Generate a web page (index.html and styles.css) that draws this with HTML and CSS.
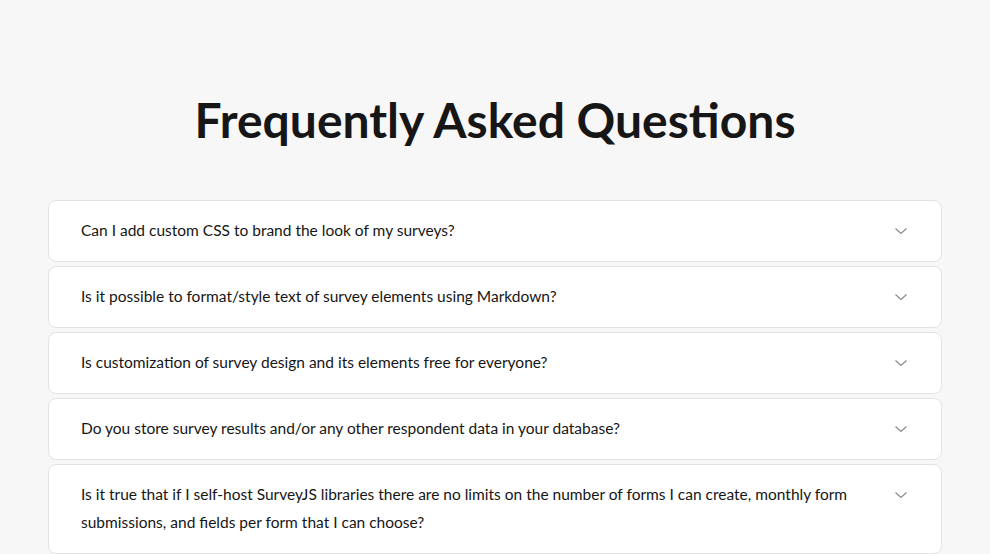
FILE: index.html
```html
<!DOCTYPE html>
<html lang="en">
<head>
<meta charset="utf-8">
<title>FAQ</title>
<link rel="stylesheet" href="styles.css">
</head>
<body>
<main class="faq">
  <h1 class="faq-title">Frequently Asked Questions</h1>
  <div class="faq-list">
    <div class="faq-item">
      <span class="faq-q">Can I add custom CSS to brand the look of my surveys?</span>
      <svg class="faq-icon" viewBox="0 0 16 16" width="16" height="16"><path d="M2.5 5.5 L8 10.5 L13.5 5.5" fill="none" stroke="#8a8a8a" stroke-width="1.2"/></svg>
    </div>
    <div class="faq-item">
      <span class="faq-q">Is it possible to format/style text of survey elements using Markdown?</span>
      <svg class="faq-icon" viewBox="0 0 16 16" width="16" height="16"><path d="M2.5 5.5 L8 10.5 L13.5 5.5" fill="none" stroke="#8a8a8a" stroke-width="1.2"/></svg>
    </div>
    <div class="faq-item">
      <span class="faq-q">Is customization of survey design and its elements free for everyone?</span>
      <svg class="faq-icon" viewBox="0 0 16 16" width="16" height="16"><path d="M2.5 5.5 L8 10.5 L13.5 5.5" fill="none" stroke="#8a8a8a" stroke-width="1.2"/></svg>
    </div>
    <div class="faq-item">
      <span class="faq-q">Do you store survey results and/or any other respondent data in your database?</span>
      <svg class="faq-icon" viewBox="0 0 16 16" width="16" height="16"><path d="M2.5 5.5 L8 10.5 L13.5 5.5" fill="none" stroke="#8a8a8a" stroke-width="1.2"/></svg>
    </div>
    <div class="faq-item">
      <span class="faq-q">Is it true that if I self-host SurveyJS libraries there are no limits on the number of forms I can create, monthly form submissions, and fields per form that I can choose?</span>
      <svg class="faq-icon" viewBox="0 0 16 16" width="16" height="16"><path d="M2.5 5.5 L8 10.5 L13.5 5.5" fill="none" stroke="#8a8a8a" stroke-width="1.2"/></svg>
    </div>
  </div>
</main>
</body>
</html>
```

FILE: styles.css
```css
html, body {
  margin: 0;
  padding: 0;
  background: #f7f7f7;
  font-family: Lato, "Noto Sans", sans-serif;
  color: #161616;
}
.faq {
  padding: 84px 48px 0;
}
.faq-title {
  margin: 0 0 44px;
  text-align: center;
  font-size: 48px;
  line-height: 72px;
  font-weight: 700;
  color: #161616;
}
.faq-list {
  display: flex;
  flex-direction: column;
  gap: 4px;
}
.faq-item {
  display: flex;
  align-items: flex-start;
  gap: 24px;
  padding: 16px 32px;
  background: #fff;
  border: 1px solid #e3e3e3;
  border-radius: 8px;
}
.faq-q {
  flex: 1;
  font-size: 15.5px;
  line-height: 28px;
  margin-top: -1px;
  margin-bottom: 1px;
}
.faq-icon {
  flex: none;
  margin-top: 6px;
}
```
